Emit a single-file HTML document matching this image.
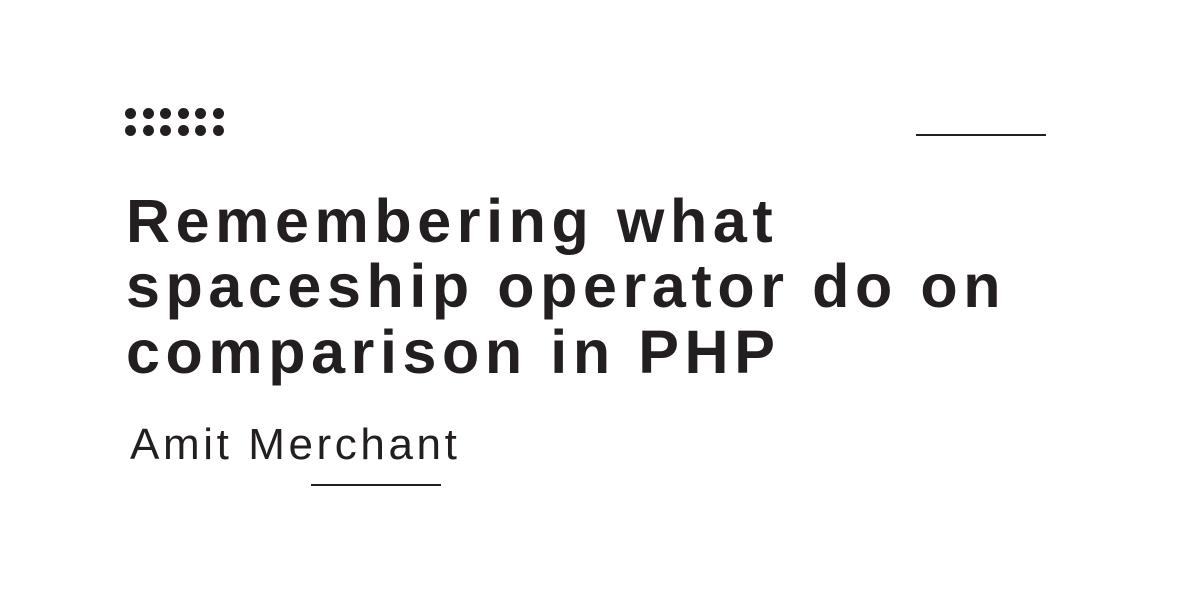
<!DOCTYPE html>
<html><head><style>
body{margin:0;width:1200px;height:600px;background:#fff;position:relative;overflow:hidden;font-family:"Liberation Sans",sans-serif;color:#231f20}
.d{position:absolute;width:11px;height:11px;border-radius:50%;background:#231f20}
.t{position:absolute;left:126px;font-weight:bold;font-size:61px;letter-spacing:5.6px;white-space:nowrap;line-height:1}
.l{position:absolute;height:2px;background:#231f20}
</style></head><body>
<div id="dots"></div>
<script>
var s='';for(var r=0;r<2;r++)for(var c=0;c<6;c++){s+='<div class="d" style="left:'+(125+c*17.6)+'px;top:'+(108+r*17)+'px"></div>'}
document.getElementById('dots').innerHTML=s;
</script>
<div class="l" style="left:916px;top:134px;width:130px"></div>
<div class="t" style="top:191px">Remembering what</div>
<div class="t" style="top:256px">spaceship operator do on</div>
<div class="t" style="top:322px">comparison in PHP</div>
<div style="position:absolute;left:130px;top:423px;font-size:44px;letter-spacing:3.6px;white-space:nowrap;line-height:1">Amit Merchant</div>
<div class="l" style="left:311px;top:484px;width:130px"></div>
</body></html>
